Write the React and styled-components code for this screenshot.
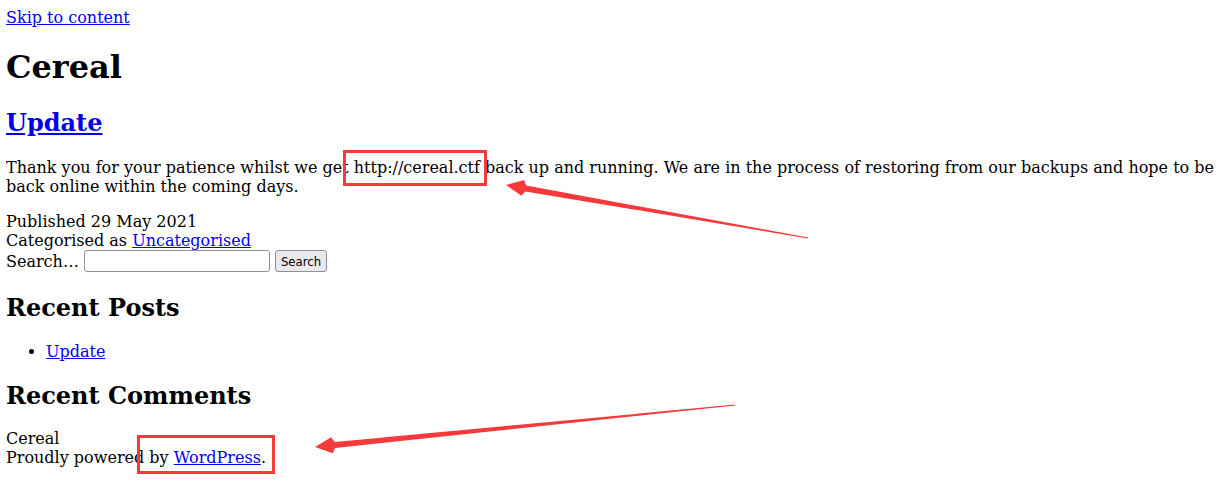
import React from 'react';
import styled, { createGlobalStyle } from 'styled-components';

const GlobalStyle = createGlobalStyle`
  body {
    margin: 8px 6px;
    font-family: "DejaVu Serif", serif;
    font-size: 16px;
    color: #000;
    background: #fff;
  }
  a { color: #0000ee; }
`;

const Page = styled.div`
  display: block;
`;

const SiteTitle = styled.h1`
  font-size: 32px;
  font-weight: bold;
  margin: 21.44px 0;
`;

const Heading = styled.h2`
  font-size: 24px;
  font-weight: bold;
  margin: 19.92px 0;
`;

const Text = styled.p`
  margin: 16px 0;
  padding-top: 1px;
`;

const Meta = styled.div`
  line-height: normal;
`;

const SearchForm = styled.form`
  display: flex;
  align-items: center;
  height: 23px;
`;

const Label = styled.span`
  margin-right: 5px;
`;

const Field = styled.input`
  box-sizing: border-box;
  width: 186px;
  height: 22px;
  border: 1px solid #8f8f9d;
  border-radius: 3px;
  padding: 1px 2px;
  font: 13px "DejaVu Sans", sans-serif;
  margin-right: 5px;
`;

const Button = styled.button`
  box-sizing: border-box;
  height: 22px;
  padding: 1px 5px;
  border: 1px solid #8f8f9d;
  border-radius: 3px;
  background: #e9e9ed;
  font: 13px "DejaVu Sans Condensed", "DejaVu Sans", sans-serif;
  font-stretch: condensed;
  color: #000;
`;

const List = styled.ul`
  margin: 16px 0;
  padding-left: 40px;
`;

const Overlay = styled.svg`
  position: fixed;
  top: 0;
  left: 0;
  width: 1221px;
  height: 482px;
  pointer-events: none;
`;

const RED = '#f43a3a';

function arrowPoints([tx, ty], [sx, sy]) {
  const len = Math.hypot(tx - sx, ty - sy);
  const ux = (tx - sx) / len;
  const uy = (ty - sy) / len;
  const nx = -uy;
  const ny = ux;
  const bx = tx - 20 * ux;
  const by = ty - 20 * uy;
  const pts = [
    [tx, ty],
    [bx + 8 * nx + 3 * ux, by + 8 * ny + 3 * uy],
    [bx + 3 * nx, by + 3 * ny],
    [sx + 0.4 * nx, sy + 0.4 * ny],
    [sx - 0.4 * nx, sy - 0.4 * ny],
    [bx - 3 * nx, by - 3 * ny],
    [bx - 8 * nx + 3 * ux, by - 8 * ny + 3 * uy],
  ];
  return pts.map((p) => p.map((v) => v.toFixed(1)).join(',')).join(' ');
}

const Annotations = () => (
  <Overlay viewBox="0 0 1221 482">
    <rect x="344.5" y="151.5" width="141" height="33" fill="none" stroke={RED} strokeWidth="3" />
    <rect x="138.5" y="436.5" width="135" height="36" fill="none" stroke={RED} strokeWidth="3" />
    <polygon points={arrowPoints([506, 185], [808, 238])} fill={RED} />
    <polygon points={arrowPoints([315, 447], [735, 405])} fill={RED} />
  </Overlay>
);

const App = () => (
  <Page>
    <GlobalStyle />
    <a href="#content">Skip to content</a>
    <SiteTitle>Cereal</SiteTitle>
    <Heading>
      <a href="#update">Update</a>
    </Heading>
    <Text>
      Thank you for your patience whilst we get http://cereal.ctf back up and running. We are in the
      process of restoring from our backups and hope to be back online within the coming days.
    </Text>
    <Meta>
      Published 29 May 2021
      <br />
      Categorised as <a href="#uncategorised">Uncategorised</a>
    </Meta>
    <SearchForm onSubmit={(e) => e.preventDefault()}>
      <Label>Search…</Label>
      <Field type="text" />
      <Button type="submit">Search</Button>
    </SearchForm>
    <Heading>Recent Posts</Heading>
    <List>
      <li>
        <a href="#update">Update</a>
      </li>
    </List>
    <Heading>Recent Comments</Heading>
    <Meta>
      Cereal
      <br />
      Proudly powered by <a href="#wordpress">WordPress</a>.
    </Meta>
    <Annotations />
  </Page>
);

export default App;
